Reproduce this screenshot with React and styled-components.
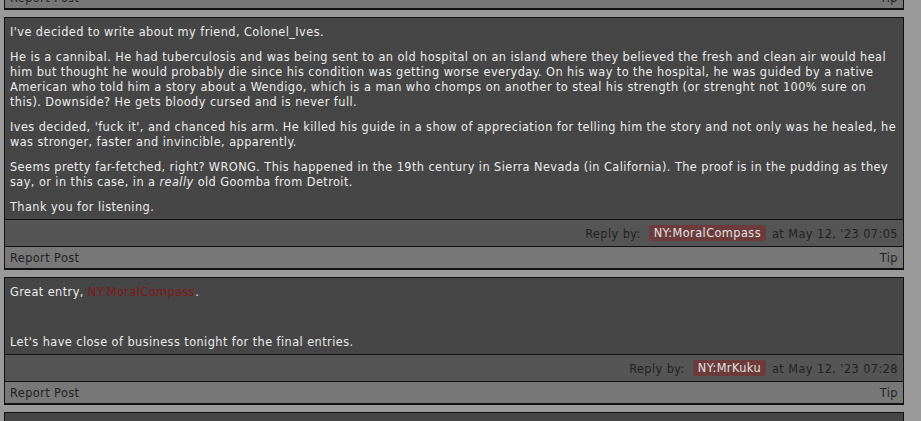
import React from "react";
import styled, { createGlobalStyle } from "styled-components";

const GlobalStyle = createGlobalStyle`
  body {
    margin: 0;
    background-color: #9a9a9a;
    font-family: "DejaVu Sans Condensed", "DejaVu Sans", sans-serif;
    font-stretch: condensed;
    font-size: 12.6px;
    letter-spacing: 0.43px;
    overflow: hidden;
  }
`;

const Thread = styled.div`
  width: 900px;
  margin: -15px 0 0 4px;
  display: flex;
  flex-direction: column;
  gap: 7px;
`;

const Post = styled.div`
  border: 1px solid #111;
  border-bottom-width: 2px;
  background-color: #464646;
`;

const Body = styled.div`
  padding: 6px 5px 5px;
  color: #ececec;
  line-height: 15px;

  p {
    margin: 0 0 10px;
  }
  p:last-child {
    margin-bottom: 0;
  }
`;

const Mention = styled.span`
  color: #821818;
`;

const Meta = styled.div`
  display: flex;
  justify-content: flex-end;
  align-items: center;
  gap: 6px;
  height: 26px;
  padding: 0 5px;
  background-color: #555;
  border-top: 1px solid #111;
  color: #222;
`;

const Badge = styled.span`
  background-color: #6d3b3b;
  color: #e2e2e2;
  border-radius: 3px;
  line-height: 16px;
  padding: 0 5px;
  margin-left: 2px;
`;

const Footer = styled.div`
  display: flex;
  justify-content: space-between;
  align-items: center;
  height: 21px;
  padding: 0 5px;
  background-color: #787878;
  border-top: 1px solid #111;
  color: #222;
`;

const PostFooter = () => (
  <Footer>
    <span>Report Post</span>
    <span>Tip</span>
  </Footer>
);

const Reply = ({ user, time, children }) => (
  <Post>
    <Body>{children}</Body>
    <Meta>
      <span>Reply by:</span>
      <Badge>{user}</Badge>
      <span>at {time}</span>
    </Meta>
    <PostFooter />
  </Post>
);

export default function App() {
  return (
    <>
      <GlobalStyle />
      <Thread>
        <Post>
          <PostFooter />
        </Post>

        <Reply user="NY:MoralCompass" time="May 12, '23 07:05">
          <p>I've decided to write about my friend, Colonel_Ives.</p>
          <p>
            He is a cannibal. He had tuberculosis and was being sent to an old
            hospital on an island where they believed the fresh and clean air
            would heal him but thought he would probably die since his condition
            was getting worse everyday. On his way to the hospital, he was guided
            by a native American who told him a story about a Wendigo, which is a
            man who chomps on another to steal his strength (or strenght not 100%
            sure on this). Downside? He gets bloody cursed and is never full.
          </p>
          <p>
            Ives decided, 'fuck it', and chanced his arm. He killed his guide in
            a show of appreciation for telling him the story and not only was he
            healed, he was stronger, faster and invincible, apparently.
          </p>
          <p>
            Seems pretty far-fetched, right? WRONG. This happened in the 19th
            century in Sierra Nevada (in California). The proof is in the
            pudding as they say, or in this case, in a <i>really</i> old Goomba
            from Detroit.
          </p>
          <p>Thank you for listening.</p>
        </Reply>

        <Reply user="NY:MrKuku" time="May 12, '23 07:28">
          <p>
            Great entry, <Mention>NY:MoralCompass</Mention>.
          </p>
          <p>&nbsp;</p>
          <p>Let's have close of business tonight for the final entries.</p>
        </Reply>

        <Reply user="NY:Colonel_Ives" time="May 12, '23 07:41">
          <p>
            Kuku fed like he always smells too much rot every day we wanted to
            kill a king.
          </p>
        </Reply>
      </Thread>
    </>
  );
}
